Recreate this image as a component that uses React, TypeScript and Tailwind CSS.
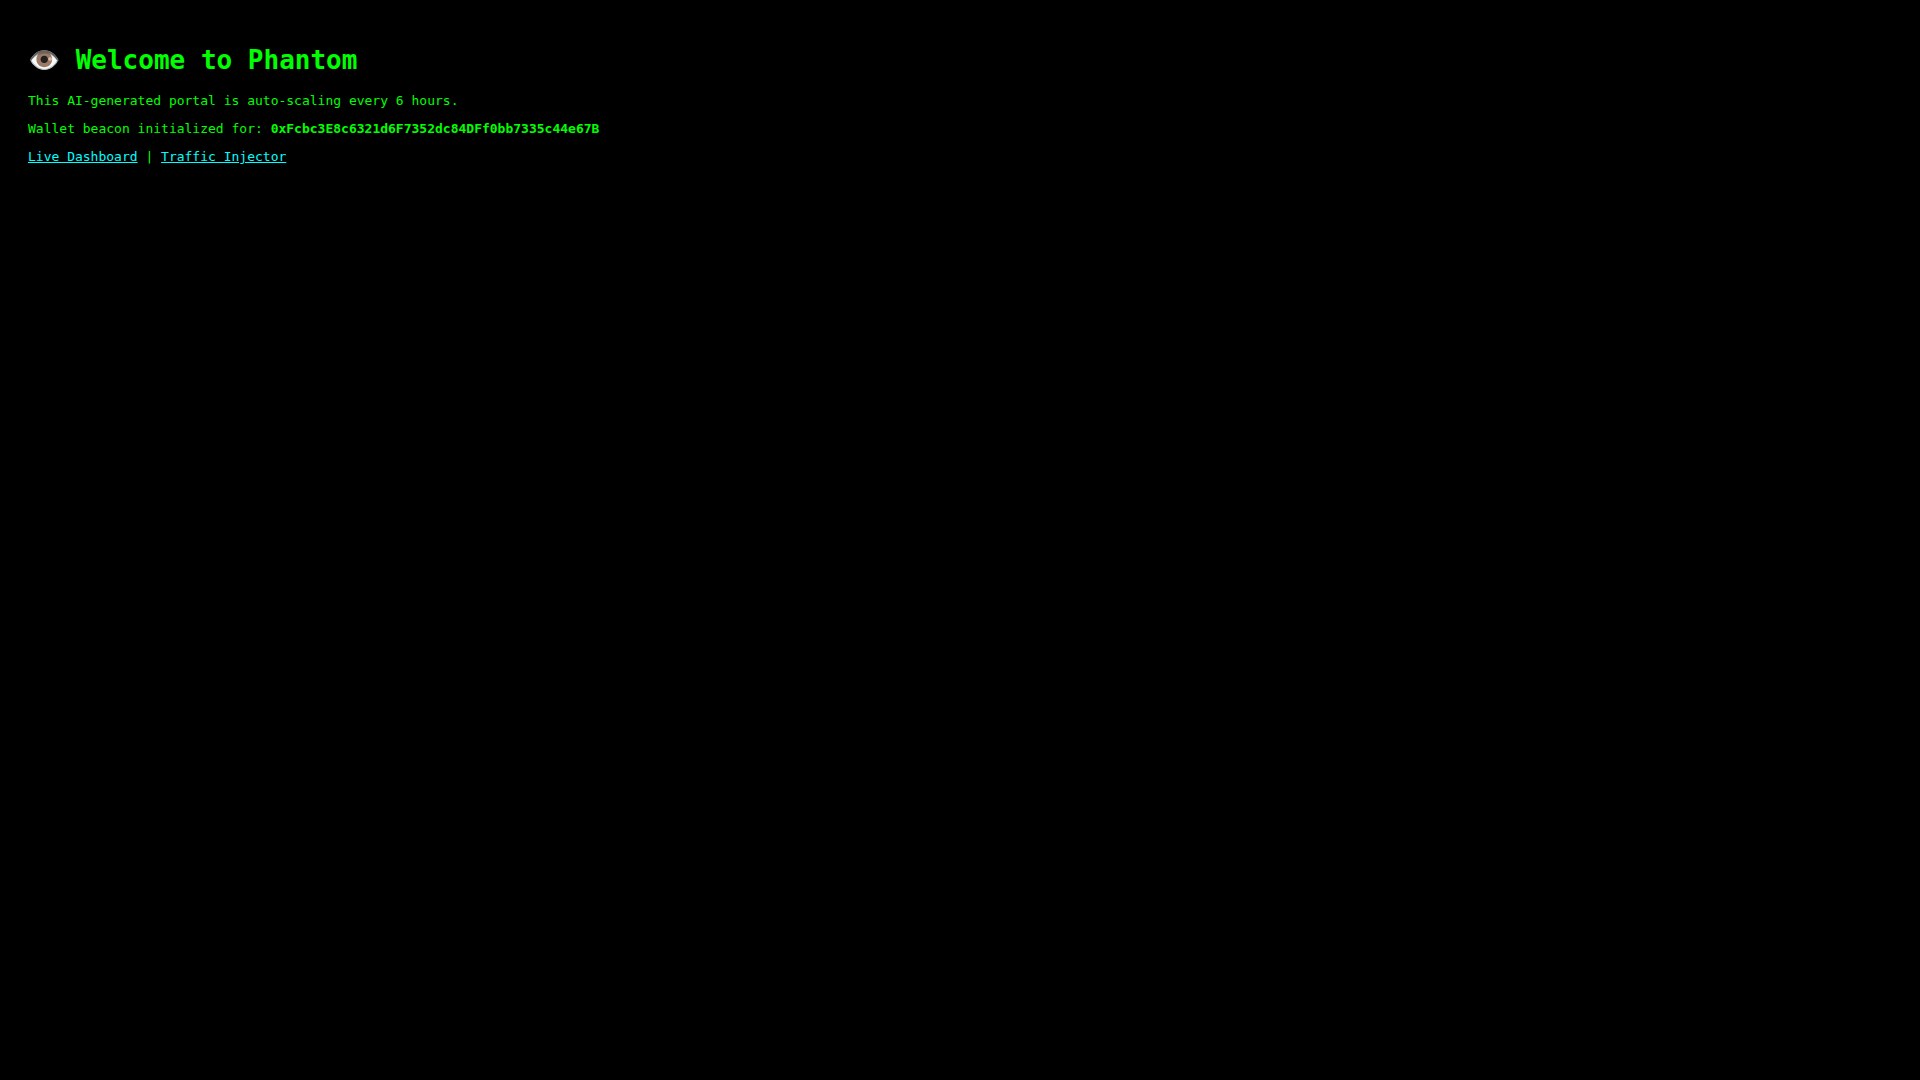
const WALLET_ADDRESS = '0xFcbc3E8c6321d6F7352dc84DFf0bb7335c44e67B';

export default function App() {
  return (
    <div className="min-h-screen bg-black px-7 py-11 font-['DejaVu_Sans_Mono',monospace] text-[13px] leading-4 text-[#00ff00]">
      <h1 className="mb-[17px] text-[26px] leading-8 font-bold">👁️ Welcome to Phantom</h1>
      <p className="mb-3">This AI-generated portal is auto-scaling every 6 hours.</p>
      <p className="mb-3">
        Wallet beacon initialized for: <strong>{WALLET_ADDRESS}</strong>
      </p>
      <p>
        <a href="#dashboard" className="text-[#00ffff] underline">Live Dashboard</a>
        {' | '}
        <a href="#traffic" className="text-[#00ffff] underline">Traffic Injector</a>
      </p>
    </div>
  );
}
